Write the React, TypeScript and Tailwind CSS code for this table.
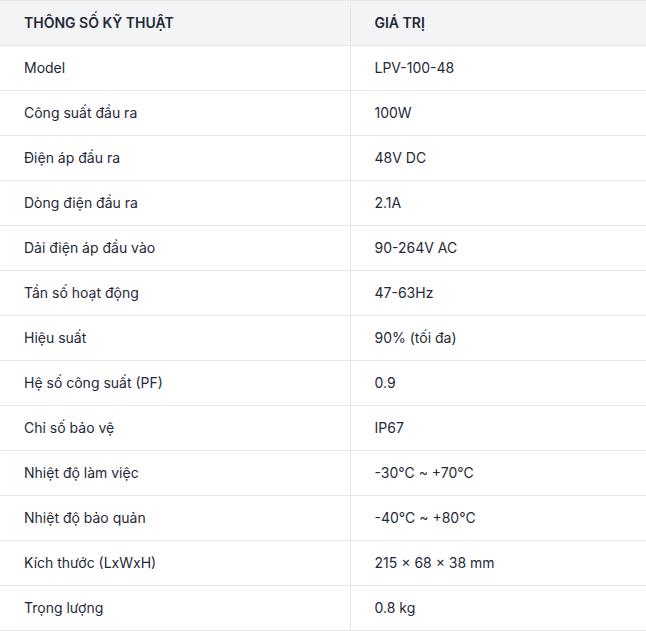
const SPECS: [string, string][] = [
  ["Model", "LPV-100-48"],
  ["Công suất đầu ra", "100W"],
  ["Điện áp đầu ra", "48V DC"],
  ["Dòng điện đầu ra", "2.1A"],
  ["Dải điện áp đầu vào", "90-264V AC"],
  ["Tần số hoạt động", "47-63Hz"],
  ["Hiệu suất", "90% (tối đa)"],
  ["Hệ số công suất (PF)", "0.9"],
  ["Chỉ số bảo vệ", "IP67"],
  ["Nhiệt độ làm việc", "-30°C ~ +70°C"],
  ["Nhiệt độ bảo quản", "-40°C ~ +80°C"],
  ["Kích thước (LxWxH)", "215 × 68 × 38 mm"],
  ["Trọng lượng", "0.8 kg"],
];

export default function App() {
  return (
    <div className="min-h-screen bg-white font-['Inter',sans-serif] text-sm text-[#1f2937]">
      <table className="w-full border-collapse text-left">
        <thead>
          <tr className="border-y border-[#e5e7eb] bg-[#f3f4f6]">
            <th className="h-[45px] w-[350px] border-r border-[#e5e7eb] px-6 py-0 font-semibold uppercase">
              Thông số kỹ thuật
            </th>
            <th className="h-[45px] px-6 py-0 font-semibold uppercase">Giá trị</th>
          </tr>
        </thead>
        <tbody>
          {SPECS.map(([label, value]) => (
            <tr key={label} className="border-b border-[#e5e7eb]">
              <td className="h-[45px] border-r border-[#e5e7eb] px-6 py-0">{label}</td>
              <td className="h-[45px] px-6 py-0">{value}</td>
            </tr>
          ))}
        </tbody>
      </table>
    </div>
  );
}
